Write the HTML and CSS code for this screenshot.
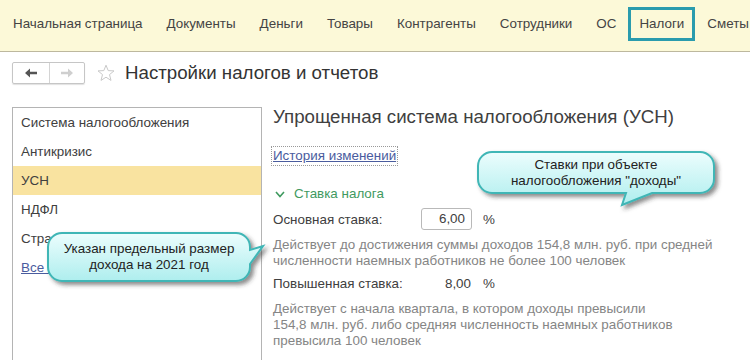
FILE: index.html
```html
<!DOCTYPE html>
<html lang="ru">
<head>
    <meta charset="UTF-8">
    <meta name="viewport" content="width=device-width, initial-scale=1.0">
    <title>Настройки налогов и отчетов</title>
    <link rel="stylesheet" href="styles.css">
</head>
<body>
    <header class="topbar">
        <nav class="sections">
            <span class="section">Начальная страница</span>
            <span class="section">Документы</span>
            <span class="section">Деньги</span>
            <span class="section">Товары</span>
            <span class="section">Контрагенты</span>
            <span class="section">Сотрудники</span>
            <span class="section">ОС</span>
            <span class="section section-active">Налоги</span>
            <span class="section">Сметы</span>
        </nav>
    </header>

    <div class="toolbar">
        <div class="history-btns">
            <span class="hbtn">
                <svg width="12" height="10" viewBox="0 0 12 10"><path d="M0,5 L5,0.5 V3.8 H12 V6.2 H5 V9.5 Z" fill="#555"/></svg>
            </span>
            <span class="hbtn">
                <svg width="12" height="10" viewBox="0 0 12 10"><path d="M12,5 L7,0.5 V3.8 H0 V6.2 H7 V9.5 Z" fill="#cfcfcf"/></svg>
            </span>
        </div>
        <svg class="star" width="18" height="18" viewBox="0 0 18 18"><path d="M9,1.2 L11.2,6.6 L17,6.9 L12.5,10.6 L14,16.4 L9,13.2 L4,16.4 L5.5,10.6 L1,6.9 L6.8,6.6 Z" fill="none" stroke="#c9c9c9" stroke-width="1"/></svg>
        <h1 class="form-title">Настройки налогов и отчетов</h1>
    </div>

    <main class="workspace">
        <ul class="groups">
            <li>Система налогообложения</li>
            <li>Антикризис</li>
            <li class="group-current">УСН</li>
            <li>НДФЛ</li>
            <li>Страховые взносы</li>
            <li><a class="link" href="#">Все настройки</a></li>
        </ul>

        <section class="settings">
            <h2 class="settings-title">Упрощенная система налогообложения (УСН)</h2>
            <a class="link history-link" href="#">История изменений</a>
            <div class="group-head">
                <svg width="10" height="7" viewBox="0 0 10 7"><polyline points="1,1 5,5.5 9,1" fill="none" stroke="#3f9a5f" stroke-width="1.6"/></svg>
                Ставка налога
            </div>
            <div class="rate-row">
                <span class="rate-label">Основная ставка:</span>
                <span class="rate-input">6,00</span>
                <span>%</span>
            </div>
            <p class="note">Действует до достижения суммы доходов 154,8 млн. руб. при средней<br>численности наемных работников не более 100 человек</p>
            <div class="rate-row">
                <span class="rate-label">Повышенная ставка:</span>
                <span class="rate-value">8,00</span>
                <span>%</span>
            </div>
            <p class="note">Действует с начала квартала, в котором доходы превысили<br>154,8 млн. руб. либо средняя численность наемных работников<br>превысила 100 человек</p>
        </section>
    </main>

    <!-- выноски поверх формы -->
    <div class="callout callout-rates">
        <svg class="callout-shape" width="250" height="64" viewBox="0 0 250 64">
            <defs>
                <linearGradient id="fillRates" x1="0" y1="0" x2="0" y2="1">
                    <stop offset="0" stop-color="#ecfdfd"/>
                    <stop offset="1" stop-color="#aeeeee"/>
                </linearGradient>
                <filter id="shadowRates" x="-10%" y="-20%" width="130%" height="160%">
                    <feDropShadow dx="3" dy="3" stdDeviation="2" flood-color="#333" flood-opacity="0.55"/>
                </filter>
            </defs>
            <path d="M18,4 H226 A14,14 0 0 1 240,18 V31 A14,14 0 0 1 226,45 H178 L148,57 L152,45 H18 A14,14 0 0 1 4,31 V18 A14,14 0 0 1 18,4 Z" fill="url(#fillRates)" stroke="#3fb6b6" stroke-width="2" filter="url(#shadowRates)"/>
        </svg>
        <span class="callout-text">Ставки при объекте<br>налогообложения "доходы"</span>
    </div>

    <div class="callout callout-limit">
        <svg class="callout-shape" width="226" height="60" viewBox="0 0 226 60">
            <defs>
                <linearGradient id="fillLimit" x1="0" y1="0" x2="0" y2="1">
                    <stop offset="0" stop-color="#ecfdfd"/>
                    <stop offset="1" stop-color="#aeeeee"/>
                </linearGradient>
                <filter id="shadowLimit" x="-10%" y="-20%" width="130%" height="160%">
                    <feDropShadow dx="3" dy="3" stdDeviation="2" flood-color="#333" flood-opacity="0.55"/>
                </filter>
            </defs>
            <path d="M18,4 H192 A14,14 0 0 1 206,18 V21 L219,17 L206,35 V38 A14,14 0 0 1 192,52 H18 A14,14 0 0 1 4,38 V18 A14,14 0 0 1 18,4 Z" fill="url(#fillLimit)" stroke="#3fb6b6" stroke-width="2" filter="url(#shadowLimit)"/>
        </svg>
        <span class="callout-text">Указан предельный размер<br>дохода на 2021 год</span>
    </div>
</body>
</html>
```

FILE: styles.css
```css
* {
    padding: 0;
    margin: 0;
    box-sizing: border-box;
}
body {
    width: 750px;
    height: 360px;
    overflow: hidden;
    position: relative;
    background: #fff;
    font-family: "Liberation Sans", Arial, sans-serif;
    font-size: 13.4px;
    color: #404040;
}
.topbar {
    height: 52px;
    background: #fcf9d8;
    border-bottom: 1px solid #bdb89e;
    display: flex;
    align-items: center;
    padding-bottom: 4px;
}
.sections {
    display: flex;
    align-items: center;
    padding-left: 1px;
    white-space: nowrap;
}
.section {
    padding: 0 12px;
    line-height: 16px;
    color: #444;
}
.section-active {
    border: 3px solid #2a9cad;
    padding: 6px 8px;
}
.toolbar {
    display: flex;
    align-items: center;
    height: 22px;
    margin-top: 10px;
    padding-left: 12px;
}
.history-btns {
    display: flex;
    height: 22px;
    border: 1px solid #c6c6c6;
    border-radius: 2px;
    box-shadow: 0 1px 1px rgba(0, 0, 0, 0.12);
}
.hbtn {
    width: 36px;
    display: flex;
    align-items: center;
    justify-content: center;
}
.hbtn + .hbtn {
    border-left: 1px solid #d4d4d4;
    width: 35px;
}
.star {
    margin-left: 12px;
}
.form-title {
    margin-left: 10px;
    font-size: 18.7px;
    font-weight: normal;
    color: #333;
}
.workspace {
    display: flex;
    margin-top: 23px;
    padding-left: 12px;
}
.groups {
    list-style: none;
    width: 250px;
    height: 260px;
    border: 1px solid #b4b4b4;
    border-bottom: none;
    flex-shrink: 0;
}
.groups li {
    height: 29px;
    line-height: 29px;
    padding-left: 8px;
}
.groups .group-current {
    background: #f9e3a0;
}
.link {
    color: #4a5c9e;
    text-decoration: underline;
}
.settings {
    margin-left: 11px;
}
.settings-title {
    font-size: 18.7px;
    font-weight: normal;
    line-height: 20px;
    color: #404040;
}
.history-link {
    display: inline-block;
    margin-top: 21px;
    line-height: 16px;
    outline: 1px dotted #999;
    outline-offset: 1px;
}
.group-head {
    display: flex;
    align-items: center;
    gap: 9px;
    margin-top: 22px;
    padding-left: 2px;
    line-height: 16px;
    color: #3f9a5f;
}
.rate-row {
    display: grid;
    grid-template-columns: 137px 51px auto;
    column-gap: 11px;
    align-items: center;
    height: 22px;
    margin-top: 6px;
}
.rate-input {
    height: 22px;
    line-height: 20px;
    border: 1px solid #b9b9b9;
    border-radius: 3px;
    text-align: right;
    padding-right: 6px;
}
.rate-value {
    text-align: right;
    padding-right: 1px;
}
.note {
    margin-top: 7px;
    line-height: 16px;
    color: #858585;
}
.note + .rate-row {
    margin-top: 3px;
}
.callout {
    position: absolute;
    display: flex;
    align-items: center;
    justify-content: center;
}
.callout-shape {
    position: absolute;
    left: -4px;
    top: -4px;
    overflow: visible;
}
.callout-text {
    position: relative;
    text-align: center;
    line-height: 16px;
    color: #222;
}
.callout-rates {
    left: 478px;
    top: 152px;
    width: 236px;
    height: 41px;
}
.callout-limit {
    left: 48px;
    top: 233px;
    width: 202px;
    height: 48px;
}
```
